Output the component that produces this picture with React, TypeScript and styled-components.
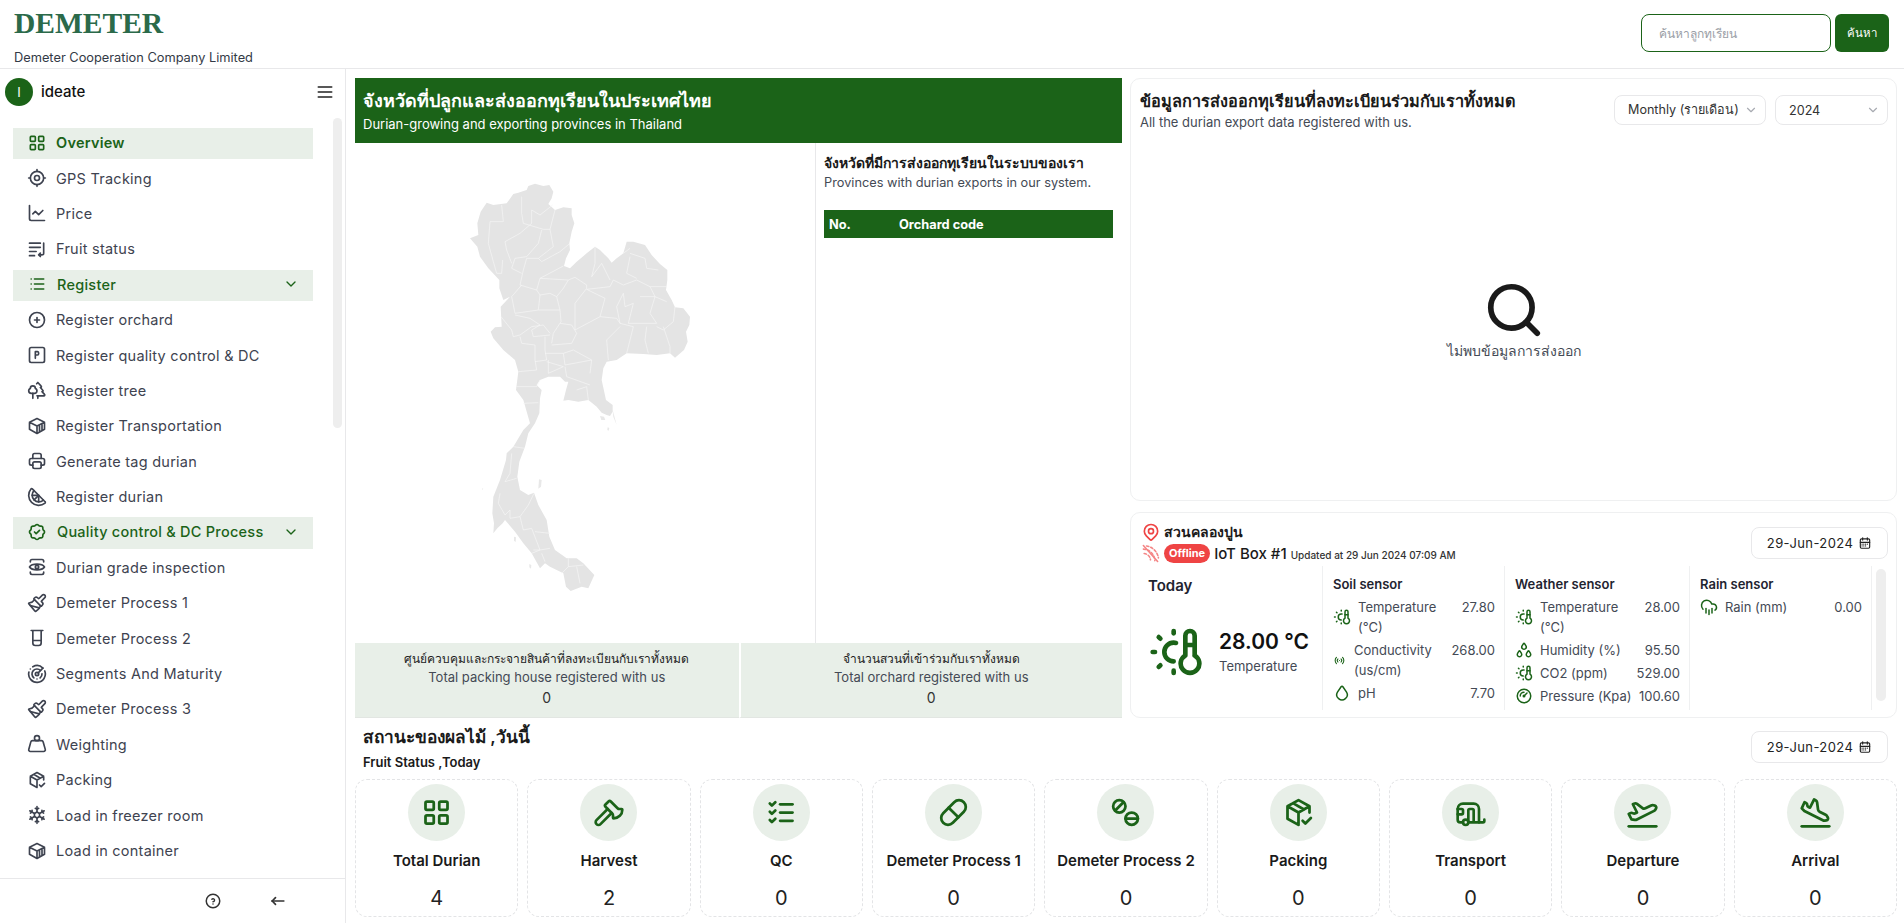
import React from "react";
import styled, { createGlobalStyle } from "styled-components";
import {
  TbLayoutGrid, TbCurrentLocation, TbList, TbChevronDown, TbCirclePlus, TbParking,
  TbPrinter, TbRosetteDiscountCheck, TbSnowflake, TbHelpCircle, TbArrowNarrowLeft,
  TbCalendarMonth, TbMenu2, TbListCheck, TbPill, TbMapPin,
  TbTemperatureSun, TbAccessPoint, TbDroplet, TbDroplets, TbGauge,
} from "react-icons/tb";
import {
  Paintbrush, Weight, PlaneTakeoff, PlaneLanding, Search, ChartLine, Trees, Citrus, Radar, Axe, Caravan, CloudRain,
} from "lucide-react";

const GREEN = "#1b6318";
const TINT = "#e8efe8";
const LINE = "#e8e8ea";

const Global = createGlobalStyle`
  html, body { margin: 0; padding: 0; height: 100%; overflow: hidden; background: #fff; }
  body { font-family: Inter, "Noto Sans", "Noto Sans CJK SC", sans-serif; color: #1f2430; }
  * { box-sizing: border-box; }
`;

type IconProps = { size?: number };
const Stroke = ({ size = 18, children }: IconProps & { children: React.ReactNode }) => (
  <svg width={size} height={size} viewBox="0 0 24 24" fill="none" stroke="currentColor" strokeWidth={2} strokeLinecap="round" strokeLinejoin="round">
    {children}
  </svg>
);
const WrapIcon = (p: IconProps) => (
  <Stroke {...p}><path d="M3 5h13M3 10h13M3 15h8M3 20h6M20 5v12a2 2 0 0 1-2 2h-4m2-2-2 2 2 2" /></Stroke>
);
const ContainerIcon = (p: IconProps) => (
  <Stroke {...p}><path d="M12 3l9 4.5V16l-9 5-9-5V7.5zM3 7.5l9 4.5 9-4.5M12 12v9M15 10.5v8.8M18 9v8.8" /></Stroke>
);
const GradeIcon = (p: IconProps) => (
  <Stroke {...p}><path d="M4 6V5a2 2 0 0 1 2-2h12a2 2 0 0 1 2 2v1M4 18v1a2 2 0 0 0 2 2h12a2 2 0 0 0 2-2v-1M3 12c3-4.5 15-4.5 18 0-3 4.5-15 4.5-18 0z" /><circle cx="12" cy="12" r="2" /></Stroke>
);
const CupIcon = (p: IconProps) => (
  <Stroke {...p}><path d="M5 3h14M7 3v15a3 3 0 0 0 3 3h4a3 3 0 0 0 3-3V3M7 15h10" /></Stroke>
);
const BoxCheckIcon = (p: IconProps) => (
  <Stroke {...p}><path d="M12 21l-8-4.5v-9L12 3l8 4.5V12M4 7.5l8 4.5 8-4.5M12 12v9M8 5.2l8 4.6M15 18l2 2 4-4" /></Stroke>
);
const TwoPillsIcon = (p: IconProps) => (
  <Stroke {...p}><circle cx="7.5" cy="7.5" r="4.5" /><path d="M4.5 10.5l6-6" /><circle cx="16.5" cy="16.5" r="4.5" /><path d="M12 16.5h9" /></Stroke>
);
const SignalOffIcon = (p: IconProps) => (
  <Stroke {...p}>
    <path d="M3 2l18 20" />
    <path d="M4 12a9 9 0 0 1 8 8" strokeDasharray="3 2.5" />
    <path d="M3 6.5a15 15 0 0 1 14.5 14.5" strokeDasharray="3 2.5" />
    <path d="M7 2.5a18 18 0 0 1 15 15" strokeDasharray="3 2.5" />
  </Stroke>
);

/* ---------- Header ---------- */
const Header = styled.header`
  height: 69px;
  border-bottom: 1px solid ${LINE};
  display: flex;
  justify-content: space-between;
  padding: 0 15px 0 14px;
`;
const Brand = styled.div`
  display: flex;
  flex-direction: column;
`;
const Logo = styled.div`
  font-family: "Liberation Serif", serif;
  font-weight: 700;
  font-size: 29.5px;
  line-height: 38px;
  margin-top: 4px;
  color: #2b6a4a;
`;
const Tagline = styled.div`
  font-size: 12.8px;
  line-height: 16px;
  margin-top: 8px;
  color: #333a46;
`;
const SearchBox = styled.div`
  display: flex;
  gap: 4px;
  margin-top: 14px;
  height: 38px;
`;
const SearchInput = styled.div`
  width: 190px;
  border: 1px solid ${GREEN};
  border-radius: 8px;
  padding: 0 17px;
  display: flex;
  align-items: center;
  font-size: 12px;
  color: #9a9ea6;
`;
const SearchButton = styled.div`
  width: 54px;
  background: ${GREEN};
  color: #fff;
  border-radius: 6px;
  display: flex;
  align-items: center;
  justify-content: center;
  font-size: 11.5px;
  font-weight: 500;
`;

/* ---------- Shell ---------- */
const Shell = styled.div`
  display: flex;
  height: 854px;
`;
const Sidebar = styled.aside`
  width: 346px;
  flex: none;
  border-right: 1px solid ${LINE};
  display: flex;
  flex-direction: column;
  height: 100%;
`;
const UserRow = styled.div`
  height: 49px;
  padding: 9px 10px 0 5px;
  display: flex;
  align-items: flex-start;
  gap: 8px;
`;
const Avatar = styled.div`
  width: 28px;
  height: 28px;
  border-radius: 50%;
  background: ${GREEN};
  color: #fff;
  display: flex;
  align-items: center;
  justify-content: center;
  font-size: 13px;
`;
const UserName = styled.div`
  font-size: 15px;
  font-weight: 500;
  line-height: 28px;
  flex: 1;
  color: #111;
`;
const MenuButton = styled.div`
  display: flex;
  height: 28px;
  align-items: center;
  color: #222;
`;
const NavScroll = styled.div`
  flex: 1;
  position: relative;
  padding: 10px 0 0 13px;
  overflow: hidden;
`;
const NavTrack = styled.div`
  position: absolute;
  right: 3px;
  top: 0;
  width: 9px;
  height: 310px;
  background: #eeeeee;
  border-radius: 5px;
`;
const NavList = styled.nav`
  width: 300px;
  display: flex;
  flex-direction: column;
  gap: 4px;
`;
const NavItem = styled.div<{ $active?: boolean }>`
  height: 31.4px;
  flex: none;
  display: flex;
  align-items: center;
  gap: 9px;
  padding: 0 14px 2px;
  font-size: 14.5px;
  letter-spacing: 0.25px;
  color: ${(p) => (p.$active ? GREEN : "#3e4350")};
  font-weight: ${(p) => (p.$active ? 600 : 400)};
  background: ${(p) => (p.$active ? TINT : "transparent")};
`;
const NavGroup = styled(NavItem)`
  background: ${TINT};
  color: ${GREEN};
  gap: 10px;
  font-weight: 500;
  letter-spacing: 0.25px;
`;
const NavGroupLabel = styled.span`
  flex: 1;
`;
const SideFoot = styled.div`
  height: 45px;
  flex: none;
  border-top: 1px solid ${LINE};
  display: flex;
  align-items: center;
  padding-left: 204px;
  gap: 46px;
  color: #333;
`;

/* ---------- Main ---------- */
const Main = styled.main`
  flex: 1;
  min-width: 0;
  padding: 9px 7px 0 9px;
  display: flex;
  flex-direction: column;
`;
const TopGrid = styled.div`
  display: grid;
  grid-template-columns: 767px 1fr;
  gap: 8px;
  height: 640px;
`;
const MapPanel = styled.section`
  display: flex;
  flex-direction: column;
`;
const Banner = styled.div`
  height: 65px;
  background: ${GREEN};
  color: #fff;
  padding: 9px 8px;
`;
const BannerTitle = styled.div`
  font-size: 18px;
  font-weight: 600;
  line-height: 28px;
`;
const BannerSub = styled.div`
  font-size: 13px;
  line-height: 18px;
`;
const MapBody = styled.div`
  height: 500px;
  display: flex;
`;
const MapArea = styled.div`
  width: 461px;
  border-right: 1px solid ${LINE};
  padding: 37px 0 0 105px;
`;
const ListArea = styled.div`
  flex: 1;
  padding: 10px 9px 0 8px;
`;
const ListTitle = styled.div`
  font-size: 14px;
  font-weight: 600;
  line-height: 20px;
  color: #1a1a1a;
`;
const ListSub = styled.div`
  font-size: 12.75px;
  line-height: 20px;
  color: #444a55;
`;
const TableHead = styled.div`
  margin-top: 17px;
  height: 28px;
  background: ${GREEN};
  color: #fff;
  display: grid;
  grid-template-columns: 70px 1fr;
  align-items: center;
  padding-left: 5px;
  font-size: 12.8px;
  font-weight: 700;
`;
const Totals = styled.div`
  height: 75px;
  background: ${TINT};
  display: grid;
  grid-template-columns: 1fr 1fr;
`;
const TotalCell = styled.div<{ $split?: boolean }>`
  display: flex;
  flex-direction: column;
  align-items: center;
  padding-top: 6px;
  border-left: ${(p) => (p.$split ? "2px solid #fff" : "none")};
  border-bottom: 1px solid #e2e6e2;
`;
const TotalTitle = styled.div`
  font-size: 12px;
  font-weight: 500;
  line-height: 19px;
  color: #222;
`;
const TotalSub = styled.div`
  font-size: 13px;
  line-height: 19px;
  color: #444a55;
`;
const TotalValue = styled.div`
  font-size: 14px;
  line-height: 22px;
  color: #333;
`;
const RightCol = styled.div`
  display: flex;
  flex-direction: column;
  gap: 11px;
`;
const Card = styled.section`
  border: 1px solid #eff0f1;
  border-radius: 10px;
`;
const ExportCard = styled(Card)`
  height: 423px;
  padding: 10px 8px 11px 9px;
  display: flex;
  flex-direction: column;
`;
const ExportHead = styled.div`
  display: flex;
  align-items: flex-start;
  gap: 9px;
`;
const ExportTitles = styled.div`
  flex: 1;
`;
const ExportTitle = styled.div`
  font-size: 16.3px;
  font-weight: 600;
  line-height: 24px;
  color: #1a1a1a;
`;
const ExportSub = styled.div`
  font-size: 13px;
  line-height: 19px;
  color: #444a55;
`;
const Select = styled.div<{ $w: number }>`
  width: ${(p) => p.$w}px;
  height: 30px;
  margin-top: 6px;
  border: 1px solid ${LINE};
  border-radius: 8px;
  display: flex;
  align-items: center;
  justify-content: space-between;
  padding: 0 7px 0 13px;
  font-size: 12.6px;
  color: #333;
`;
const SelectChevron = styled.span`
  display: flex;
  color: #a8abb2;
`;
const Empty = styled.div`
  flex: 1;
  display: flex;
  flex-direction: column;
  align-items: center;
  padding-top: 147px;
  color: #1a1a1a;
`;
const EmptyText = styled.div`
  font-size: 14px;
  line-height: 20px;
  color: #444a55;
`;
const SensorCard = styled(Card)`
  height: 206px;
  padding: 9px 8px 0 10px;
  overflow: hidden;
`;
const SensorHead = styled.div`
  height: 44px;
  display: flex;
  justify-content: space-between;
`;
const SiteInfo = styled.div`
  display: flex;
  flex-direction: column;
`;
const SiteRow = styled.div`
  display: flex;
  align-items: center;
  height: 20px;
  gap: 3px;
  font-size: 14px;
  font-weight: 600;
  color: #1a1a1a;
`;
const RedIcon = styled.span`
  display: flex;
  color: #ef4444;
`;
const WifiRed = styled(RedIcon)`
  opacity: 0.65;
`;
const BoxRow = styled.div`
  display: flex;
  align-items: center;
  height: 22px;
  gap: 4px;
`;
const OfflineBadge = styled.span`
  background: #ef4444;
  color: #fff;
  font-size: 11px;
  font-weight: 700;
  height: 19px;
  border-radius: 10px;
  padding: 0 5px;
  display: flex;
  align-items: center;
`;
const BoxName = styled.span`
  font-size: 15px;
  font-weight: 500;
  color: #1a1a1a;
`;
const Updated = styled.span`
  font-size: 10px;
  font-weight: 500;
  margin-top: 3px;
  color: #333;
`;
const DateButton = styled.div`
  width: 137px;
  height: 32px;
  margin-top: 5px;
  border: 1px solid ${LINE};
  border-radius: 8px;
  display: flex;
  align-items: center;
  justify-content: center;
  gap: 5px;
  font-size: 13px;
  letter-spacing: 0.4px;
  color: #222;
`;
const SensorGrid = styled.div`
  position: relative;
  display: grid;
  grid-template-columns: 182px 182px 185px 182px;
  height: 144px;
  overflow: hidden;
`;
const ScrollThumb = styled.div`
  position: absolute;
  left: 735px;
  top: 3px;
  width: 10px;
  height: 132px;
  background: #eeeeee;
  border-radius: 5px;
`;
const SensorCol = styled.div`
  border-right: 1px solid #eff0f1;
  padding: 8px 9px 0 10px;
  overflow: hidden;
`;
const TodayCol = styled(SensorCol)`
  padding: 10px 0 0 7px;
`;
const TodayTitle = styled.div`
  font-size: 15px;
  font-weight: 600;
  line-height: 20px;
`;
const TodayBody = styled.div`
  display: flex;
  align-items: center;
  gap: 15px;
  margin-top: 28px;
  color: ${GREEN};
`;
const Mirrored = styled.span`
  display: flex;
  transform: scaleX(-1);
`;
const TodayValue = styled.div`
  font-size: 21px;
  font-weight: 600;
  line-height: 28px;
  color: #111;
`;
const TodayLabel = styled.div`
  font-size: 13px;
  line-height: 20px;
  color: #444a55;
`;
const SensorTitle = styled.div`
  font-size: 13px;
  font-weight: 600;
  line-height: 20px;
  margin-bottom: 3px;
`;
const SensorRow = styled.div<{ $tight?: boolean }>`
  display: grid;
  grid-template-columns: ${(p) => (p.$tight ? "21px" : "25px")} 1fr auto;
  align-items: center;
  margin-bottom: 3px;
  font-size: 13px;
  line-height: 20px;
  color: #444a55;
`;
const SensorIcon = styled.span`
  display: flex;
  color: ${GREEN};
`;
const SensorValue = styled.span`
  align-self: start;
`;

/* ---------- Status ---------- */
const StatusHead = styled.div`
  height: 61px;
  display: flex;
  justify-content: space-between;
  padding: 0 9px 0 8px;
`;
const StatusTitle = styled.div`
  font-size: 17.3px;
  font-weight: 600;
  line-height: 26px;
  margin-top: 6px;
  color: #1a1a1a;
`;
const StatusSub = styled.div`
  font-size: 13px;
  font-weight: 600;
  line-height: 16px;
  margin-top: 4px;
  color: #1a1a1a;
`;
const StatusDate = styled(DateButton)`
  margin-top: 13px;
`;
const StatusGrid = styled.div`
  display: grid;
  grid-template-columns: repeat(9, 1fr);
  gap: 9px;
`;
const StatusCard = styled.div`
  height: 138px;
  border: 1px dashed #e3e4e6;
  border-radius: 12px;
  display: flex;
  flex-direction: column;
  align-items: center;
  padding-top: 4px;
`;
const StatusCircle = styled.div`
  width: 57px;
  height: 57px;
  border-radius: 50%;
  background: ${TINT};
  color: ${GREEN};
  display: flex;
  align-items: center;
  justify-content: center;
`;
const StatusLabel = styled.div`
  margin-top: 10px;
  font-size: 15px;
  font-weight: 600;
  line-height: 20px;
  color: #1a1a1a;
`;
const StatusValue = styled.div`
  margin-top: 15px;
  font-size: 20px;
  line-height: 24px;
  color: #222;
`;

/* ---------- Map ---------- */
const OUTLINE =
  "M160 12 175 8 200 0 205-12 225-19 250-12 268-15 280 5 275 25 265 42 285 60 310 52 335 55 335 75 343 100 335 125 328 160 330 180 318 205 312 228 330 235 350 215 380 190 405 170 420 180 445 205 455 218 470 205 490 190 500 155 520 155 555 165 575 195 600 222 622 240 622 270 618 300 635 330 645 352 670 355 690 380 688 405 678 425 683 455 672 480 645 503 630 490 590 495 550 492 500 490 470 510 440 515 430 535 425 570 438 630 458 645 458 665 450 678 440 675 425 668 410 650 385 630 355 635 325 630 310 632 318 600 325 575 315 575 300 560 265 560 240 570 230 585 245 600 240 625 238 670 225 700 205 730 195 770 178 815 172 860 180 900 205 915 222 908 235 945 260 990 268 1040 285 1080 320 1105 350 1105 370 1120 403 1155 385 1195 365 1190 332 1203 318 1190 310 1150 270 1130 255 1120 240 1135 215 1090 190 1060 165 1025 135 990 128 1000 112 1015 100 1030 102 1000 97 970 100 920 120 870 138 810 140 790 160 770 190 720 210 700 190 630 168 600 175 545 165 510 130 480 100 445 92 425 105 412 125 410 122 350 150 320 130 330 118 295 118 270 85 235 60 200 52 170 30 145 55 135 52 100 62 65 80 38 100 45 140 40Z";
const BORDERS = [
  "M125 45 130 95 90 95 85 160 100 215 110 250 125 250 128 210",
  "M185 20 185 70 190 100 250 118 270 118 280 170 235 205",
  "M215 60 215 100 180 130 135 155 140 180 155 220",
  "M270 118 285 60M215 60 240 75 278 45",
  "M245 120 235 160 200 200 165 205 155 235 185 250",
  "M330 160 300 185 245 215 235 205 200 205 190 240 180 285 230 300 240 265 310 228",
  "M240 265 325 270 345 262 380 285 380 295 345 340 345 420 420 380 435 325 380 298",
  "M185 285 155 320 165 370M230 300 240 315 235 360 300 360 290 320 270 310 240 315",
  "M325 270 310 295 290 320M165 370 235 360",
  "M123 380 155 420 160 440 180 435 215 410 250 405 270 430",
  "M165 375 210 385 240 405 215 420 220 440 270 435",
  "M300 360 303 395 280 430 275 460M300 400 335 405 350 430 335 460 275 465",
  "M180 440 185 460 225 465 225 510 230 540 175 545M255 440 255 480 260 510 225 515",
  "M420 380 470 385 480 400 520 410M440 450 445 510M440 450 480 410M520 410 500 490",
  "M560 410 555 450 565 490M610 410 630 470 630 490M590 410 610 420 640 395 645 350",
  "M490 310 470 350 480 400M490 310 495 350 520 340M520 340 505 400 590 400 570 370 585 320 620 335",
  "M380 298 450 290 460 270 490 285 530 270 570 290 620 290M570 290 585 320M540 320 585 320",
  "M405 170 405 220 395 260 425 220 450 270M510 200 500 250 530 265M510 190 555 205 560 235 595 240M490 190 510 175",
  "M255 490 310 490 340 480 395 510 390 550M310 490 315 525 395 510M310 530 260 515",
  "M265 510 265 550 310 530M315 530 320 560 390 585M170 590 230 590 240 570M190 640 235 638M350 600 380 590 385 630",
  "M160 770 195 775M155 790 150 850 135 875 170 865",
  "M120 910 115 940 135 975 150 960 150 985 180 980 205 945 222 910M180 980 190 1020",
  "M190 1020 215 1015 240 1080 220 1080M225 1025 270 1030M215 1090 240 1080 270 1075M255 1115 245 1090",
  "M325 1105 325 1130 305 1150M350 1130 360 1180M325 1130 370 1125",
];
const ISLANDS = [
  "M237 868 245 870 243 890 235 896z",
  "M420 678 432 680 436 690 424 690z",
  "M443 712 448 714 446 722 442 720z",
  "M208 1122 214 1125 213 1136 208 1132z",
  "M162 1040 168 1042 167 1056 162 1052z",
  "M458 660 470 705 460 680z",
  "M66 895 70 896 68 900z",
];
const ThailandMap = () => (
  <svg width="240" height="420" viewBox="0 -30 720 1260">
    <path d={OUTLINE} fill="#e4e4e4" />
    {ISLANDS.map((d) => <path key={d} d={d} fill="#e8e8e8" />)}
    <path d={BORDERS.join("")} fill="none" stroke="#f6f6f6" strokeWidth={2} strokeLinejoin="round" />
  </svg>
);

/* ---------- Data ---------- */
type NavEntry = { label: string; icon: React.ReactNode; group?: boolean; active?: boolean };
const NAV: NavEntry[] = [
  { label: "Overview", icon: <TbLayoutGrid size={20} />, active: true },
  { label: "GPS Tracking", icon: <TbCurrentLocation size={20} /> },
  { label: "Price", icon: <ChartLine size={20} /> },
  { label: "Fruit status", icon: <WrapIcon size={20} /> },
  { label: "Register", icon: <TbList size={20} />, group: true },
  { label: "Register orchard", icon: <TbCirclePlus size={20} /> },
  { label: "Register quality control & DC", icon: <TbParking size={20} /> },
  { label: "Register tree", icon: <Trees size={20} /> },
  { label: "Register Transportation", icon: <ContainerIcon size={20} /> },
  { label: "Generate tag durian", icon: <TbPrinter size={20} /> },
  { label: "Register durian", icon: <Citrus size={20} /> },
  { label: "Quality control & DC Process", icon: <TbRosetteDiscountCheck size={20} />, group: true },
  { label: "Durian grade inspection", icon: <GradeIcon size={20} /> },
  { label: "Demeter Process 1", icon: <Paintbrush size={20} /> },
  { label: "Demeter Process 2", icon: <CupIcon size={20} /> },
  { label: "Segments And Maturity", icon: <Radar size={20} /> },
  { label: "Demeter Process 3", icon: <Paintbrush size={20} /> },
  { label: "Weighting", icon: <Weight size={20} /> },
  { label: "Packing", icon: <BoxCheckIcon size={20} /> },
  { label: "Load in freezer room", icon: <TbSnowflake size={20} /> },
  { label: "Load in container", icon: <ContainerIcon size={20} /> },
];

const STATUS: { label: string; value: number; icon: React.ReactNode }[] = [
  { label: "Total Durian", value: 4, icon: <TbLayoutGrid size={33} /> },
  { label: "Harvest", value: 2, icon: <Axe size={32} /> },
  { label: "QC", value: 0, icon: <TbListCheck size={33} /> },
  { label: "Demeter Process 1", value: 0, icon: <TbPill size={33} /> },
  { label: "Demeter Process 2", value: 0, icon: <TwoPillsIcon size={33} /> },
  { label: "Packing", value: 0, icon: <BoxCheckIcon size={33} /> },
  { label: "Transport", value: 0, icon: <Caravan size={32} /> },
  { label: "Departure", value: 0, icon: <PlaneTakeoff size={33} /> },
  { label: "Arrival", value: 0, icon: <PlaneLanding size={33} /> },
];

type Reading = { label: string; value: string; icon: React.ReactNode; tight?: boolean };
const SunThermo = () => (
  <Mirrored><TbTemperatureSun size={18} /></Mirrored>
);
const SOIL: Reading[] = [
  { label: "Temperature (°C)", value: "27.80", icon: <SunThermo /> },
  { label: "Conductivity (us/cm)", value: "268.00", icon: <TbAccessPoint size={13} />, tight: true },
  { label: "pH", value: "7.70", icon: <TbDroplet size={18} /> },
];
const WEATHER: Reading[] = [
  { label: "Temperature (°C)", value: "28.00", icon: <SunThermo /> },
  { label: "Humidity (%)", value: "95.50", icon: <TbDroplets size={18} /> },
  { label: "CO2 (ppm)", value: "529.00", icon: <SunThermo /> },
  { label: "Pressure (Kpa)", value: "100.60", icon: <TbGauge size={18} /> },
];
const RAIN: Reading[] = [{ label: "Rain (mm)", value: "0.00", icon: <CloudRain size={18} /> }];

const Readings = ({ title, rows }: { title: string; rows: Reading[] }) => (
  <SensorCol>
    <SensorTitle>{title}</SensorTitle>
    {rows.map((r) => (
      <SensorRow key={r.label} $tight={r.tight}>
        <SensorIcon>{r.icon}</SensorIcon>
        <span>{r.label}</span>
        <SensorValue>{r.value}</SensorValue>
      </SensorRow>
    ))}
  </SensorCol>
);

const DateValue = () => (
  <>
    29-Jun-2024 <TbCalendarMonth size={14} />
  </>
);

export default function App() {
  return (
    <>
      <Global />
      <Header>
        <Brand>
          <Logo>DEMETER</Logo>
          <Tagline>Demeter Cooperation Company Limited</Tagline>
        </Brand>
        <SearchBox>
          <SearchInput>ค้นหาลูกทุเรียน</SearchInput>
          <SearchButton>ค้นหา</SearchButton>
        </SearchBox>
      </Header>
      <Shell>
        <Sidebar>
          <UserRow>
            <Avatar>I</Avatar>
            <UserName>ideate</UserName>
            <MenuButton><TbMenu2 size={20} /></MenuButton>
          </UserRow>
          <NavScroll>
            <NavTrack />
            <NavList>
              {NAV.map((n) =>
                n.group ? (
                  <NavGroup key={n.label}>
                    {n.icon}
                    <NavGroupLabel>{n.label}</NavGroupLabel>
                    <TbChevronDown size={16} />
                  </NavGroup>
                ) : (
                  <NavItem key={n.label} $active={n.active}>
                    {n.icon}
                    {n.label}
                  </NavItem>
                ),
              )}
            </NavList>
          </NavScroll>
          <SideFoot>
            <TbHelpCircle size={18} />
            <TbArrowNarrowLeft size={20} />
          </SideFoot>
        </Sidebar>
        <Main>
          <TopGrid>
            <MapPanel>
              <Banner>
                <BannerTitle>จังหวัดที่ปลูกและส่งออกทุเรียนในประเทศไทย</BannerTitle>
                <BannerSub>Durian-growing and exporting provinces in Thailand</BannerSub>
              </Banner>
              <MapBody>
                <MapArea><ThailandMap /></MapArea>
                <ListArea>
                  <ListTitle>จังหวัดที่มีการส่งออกทุเรียนในระบบของเรา</ListTitle>
                  <ListSub>Provinces with durian exports in our system.</ListSub>
                  <TableHead>
                    <span>No.</span>
                    <span>Orchard code</span>
                  </TableHead>
                </ListArea>
              </MapBody>
              <Totals>
                <TotalCell>
                  <TotalTitle>ศูนย์ควบคุมและกระจายสินค้าที่ลงทะเบียนกับเราทั้งหมด</TotalTitle>
                  <TotalSub>Total packing house registered with us</TotalSub>
                  <TotalValue>0</TotalValue>
                </TotalCell>
                <TotalCell $split>
                  <TotalTitle>จำนวนสวนที่เข้าร่วมกับเราทั้งหมด</TotalTitle>
                  <TotalSub>Total orchard registered with us</TotalSub>
                  <TotalValue>0</TotalValue>
                </TotalCell>
              </Totals>
            </MapPanel>
            <RightCol>
              <ExportCard>
                <ExportHead>
                  <ExportTitles>
                    <ExportTitle>ข้อมูลการส่งออกทุเรียนที่ลงทะเบียนร่วมกับเราทั้งหมด</ExportTitle>
                    <ExportSub>All the durian export data registered with us.</ExportSub>
                  </ExportTitles>
                  <Select $w={152}>Monthly (รายเดือน) <SelectChevron><TbChevronDown size={14} /></SelectChevron></Select>
                  <Select $w={113}>2024 <SelectChevron><TbChevronDown size={14} /></SelectChevron></Select>
                </ExportHead>
                <Empty>
                  <Search size={62} strokeWidth={2.2} />
                  <EmptyText>ไม่พบข้อมูลการส่งออก</EmptyText>
                </Empty>
              </ExportCard>
              <SensorCard>
                <SensorHead>
                  <SiteInfo>
                    <SiteRow><RedIcon><TbMapPin size={20} /></RedIcon>สวนคลองปูน</SiteRow>
                    <BoxRow>
                      <WifiRed><SignalOffIcon size={19} /></WifiRed>
                      <OfflineBadge>Offline</OfflineBadge>
                      <BoxName>IoT Box #1</BoxName>
                      <Updated>Updated at 29 Jun 2024 07:09 AM</Updated>
                    </BoxRow>
                  </SiteInfo>
                  <DateButton><DateValue /></DateButton>
                </SensorHead>
                <SensorGrid>
                  <TodayCol>
                    <TodayTitle>Today</TodayTitle>
                    <TodayBody>
                      <Mirrored><TbTemperatureSun size={56} /></Mirrored>
                      <div>
                        <TodayValue>28.00 °C</TodayValue>
                        <TodayLabel>Temperature</TodayLabel>
                      </div>
                    </TodayBody>
                  </TodayCol>
                  <Readings title="Soil sensor" rows={SOIL} />
                  <Readings title="Weather sensor" rows={WEATHER} />
                  <Readings title="Rain sensor" rows={RAIN} />
                  <ScrollThumb />
                </SensorGrid>
              </SensorCard>
            </RightCol>
          </TopGrid>
          <StatusHead>
            <div>
              <StatusTitle>สถานะของผลไม้ ,วันนี้</StatusTitle>
              <StatusSub>Fruit Status ,Today</StatusSub>
            </div>
            <StatusDate><DateValue /></StatusDate>
          </StatusHead>
          <StatusGrid>
            {STATUS.map((s) => (
              <StatusCard key={s.label}>
                <StatusCircle>{s.icon}</StatusCircle>
                <StatusLabel>{s.label}</StatusLabel>
                <StatusValue>{s.value}</StatusValue>
              </StatusCard>
            ))}
          </StatusGrid>
        </Main>
      </Shell>
    </>
  );
}
